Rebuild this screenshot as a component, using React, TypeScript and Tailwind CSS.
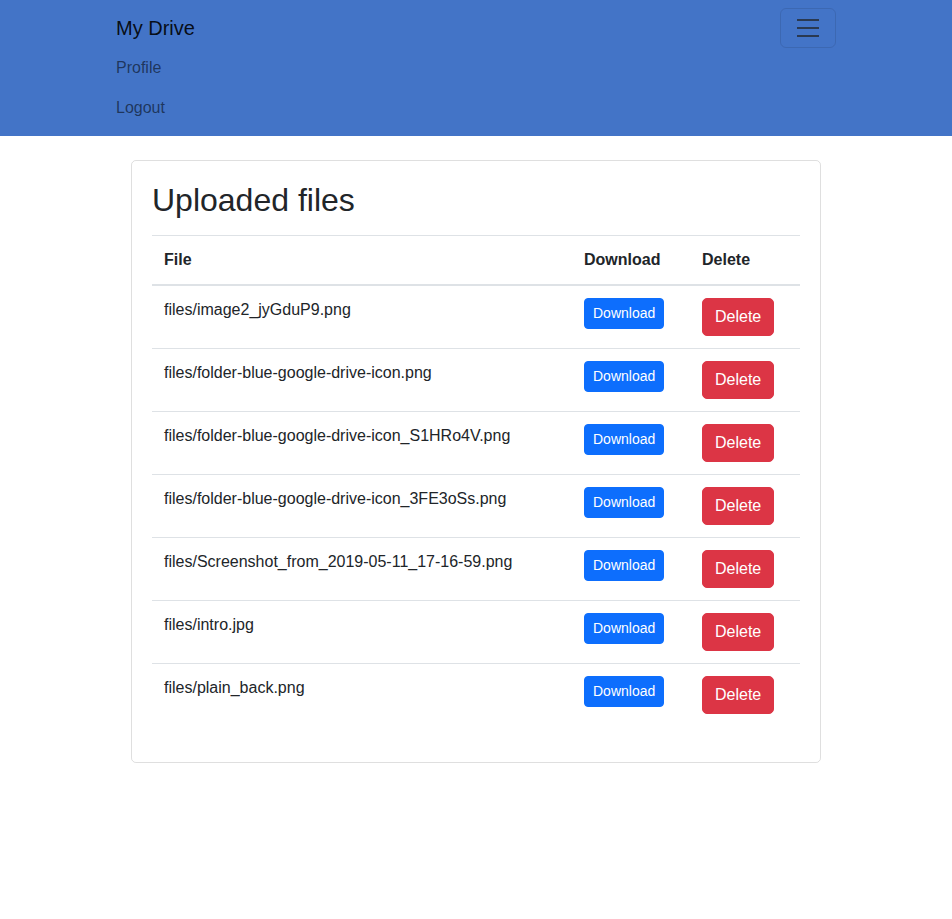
const files = [
  "files/image2_jyGduP9.png",
  "files/folder-blue-google-drive-icon.png",
  "files/folder-blue-google-drive-icon_S1HRo4V.png",
  "files/folder-blue-google-drive-icon_3FE3oSs.png",
  "files/Screenshot_from_2019-05-11_17-16-59.png",
  "files/intro.jpg",
  "files/plain_back.png",
];

function Navbar() {
  return (
    <nav className="bg-[#4374c7] py-2">
      <div className="mx-auto w-[720px]">
        <div className="flex items-start justify-between">
          <a className="py-[5px] text-[20px] leading-[30px] text-black/90">My Drive</a>
          <button className="flex h-10 w-14 items-center justify-center rounded-md border border-black/10">
            <svg width="30" height="30" viewBox="0 0 30 30">
              <path
                d="M4 7h22M4 15h22M4 23h22"
                stroke="rgba(33,37,41,0.75)"
                strokeWidth="2"
                strokeLinecap="butt"
              />
            </svg>
          </button>
        </div>
        <ul className="flex flex-col">
          <li className="py-2 leading-6 text-black/55">Profile</li>
          <li className="py-2 leading-6 text-black/55">Logout</li>
        </ul>
      </div>
    </nav>
  );
}

export default function App() {
  return (
    <div className="min-h-[919px] bg-white font-['Liberation_Sans',Arial,sans-serif] text-base text-[#212529]">
      <Navbar/>
      <div className="mx-auto mt-6 w-[690px] rounded-[5px] border border-black/[0.125] p-5">
        <h2 className="mb-4 text-[32px] font-medium leading-[38px]">Uploaded files</h2>
        <table className="mb-4 w-full border-collapse text-left">
          <thead>
            <tr className="border-t border-b-2 border-t-[#dee2e6] border-b-[#dee2e6]">
              <th className="w-[420px] p-3 font-bold leading-6">File</th>
              <th className="w-[118px] p-3 font-bold leading-6">Download</th>
              <th className="p-3 font-bold leading-6">Delete</th>
            </tr>
          </thead>
          <tbody>
            {files.map((f, i) => (
              <tr key={f} className={i > 0 ? "border-t border-[#dee2e6]" : ""}>
                <td className="p-3 align-top leading-6">{f}</td>
                <td className="p-3 align-top">
                  <button className="rounded-[4px] border border-[#0d6efd] bg-[#0d6efd] px-2 py-1 text-sm leading-[21px] text-white">
                    Download
                  </button>
                </td>
                <td className="p-3 align-top">
                  <button className="rounded-[5px] border border-[#dc3545] bg-[#dc3545] px-3 py-1.5 leading-6 text-white">
                    Delete
                  </button>
                </td>
              </tr>
            ))}
          </tbody>
        </table>
      </div>
    </div>
  );
}
